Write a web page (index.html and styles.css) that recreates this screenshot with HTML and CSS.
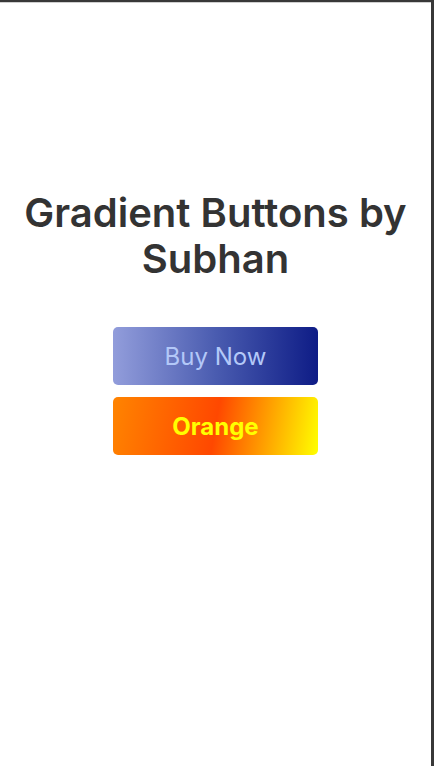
FILE: index.html
```html
<!DOCTYPE html>
<html>
<head>
<meta charset="utf-8">
<link rel="stylesheet" href="styles.css">
</head>
<body>
<div class="frame">
  <main class="content">
    <h1 class="title">Gradient Buttons by Subhan</h1>
    <div class="buttons">
      <button class="btn btn-blue">Buy Now</button>
      <button class="btn btn-orange">Orange</button>
    </div>
  </main>
</div>
</body>
</html>
```
FILE: styles.css
```css
html, body {
  margin: 0;
  padding: 0;
  height: 100%;
}
body {
  background: #fff;
  font-family: Inter, "Noto Sans", sans-serif;
}
.frame {
  box-sizing: border-box;
  height: 766px;
  border-top: 2px solid #383838;
  border-right: 3px solid #383838;
  box-shadow: inset 0 1px 0 #cfcfcf;
}
.content {
  display: flex;
  flex-direction: column;
  align-items: center;
  padding-top: 188px;
}
.title {
  margin: 0;
  padding: 0 12px;
  text-align: center;
  font-size: 40px;
  line-height: 46px;
  font-weight: 600;
  color: #333333;
}
.buttons {
  display: flex;
  flex-direction: column;
  gap: 12px;
  margin-top: 45px;
}
.btn {
  width: 205px;
  height: 58px;
  border: none;
  border-radius: 5px;
  font-family: Inter, "Noto Sans", sans-serif;
  cursor: pointer;
}
.btn-blue {
  background: linear-gradient(to right, #929ddb, #4a5cb0 50%, #0e1c86);
  color: #b3c8f8;
  font-size: 24px;
  font-weight: 400;
}
.btn-orange {
  background: linear-gradient(100deg, #ff8400, #ff4800 50%, #ffff00);
  color: #ffff00;
  font-size: 24px;
  font-weight: 700;
}
```
